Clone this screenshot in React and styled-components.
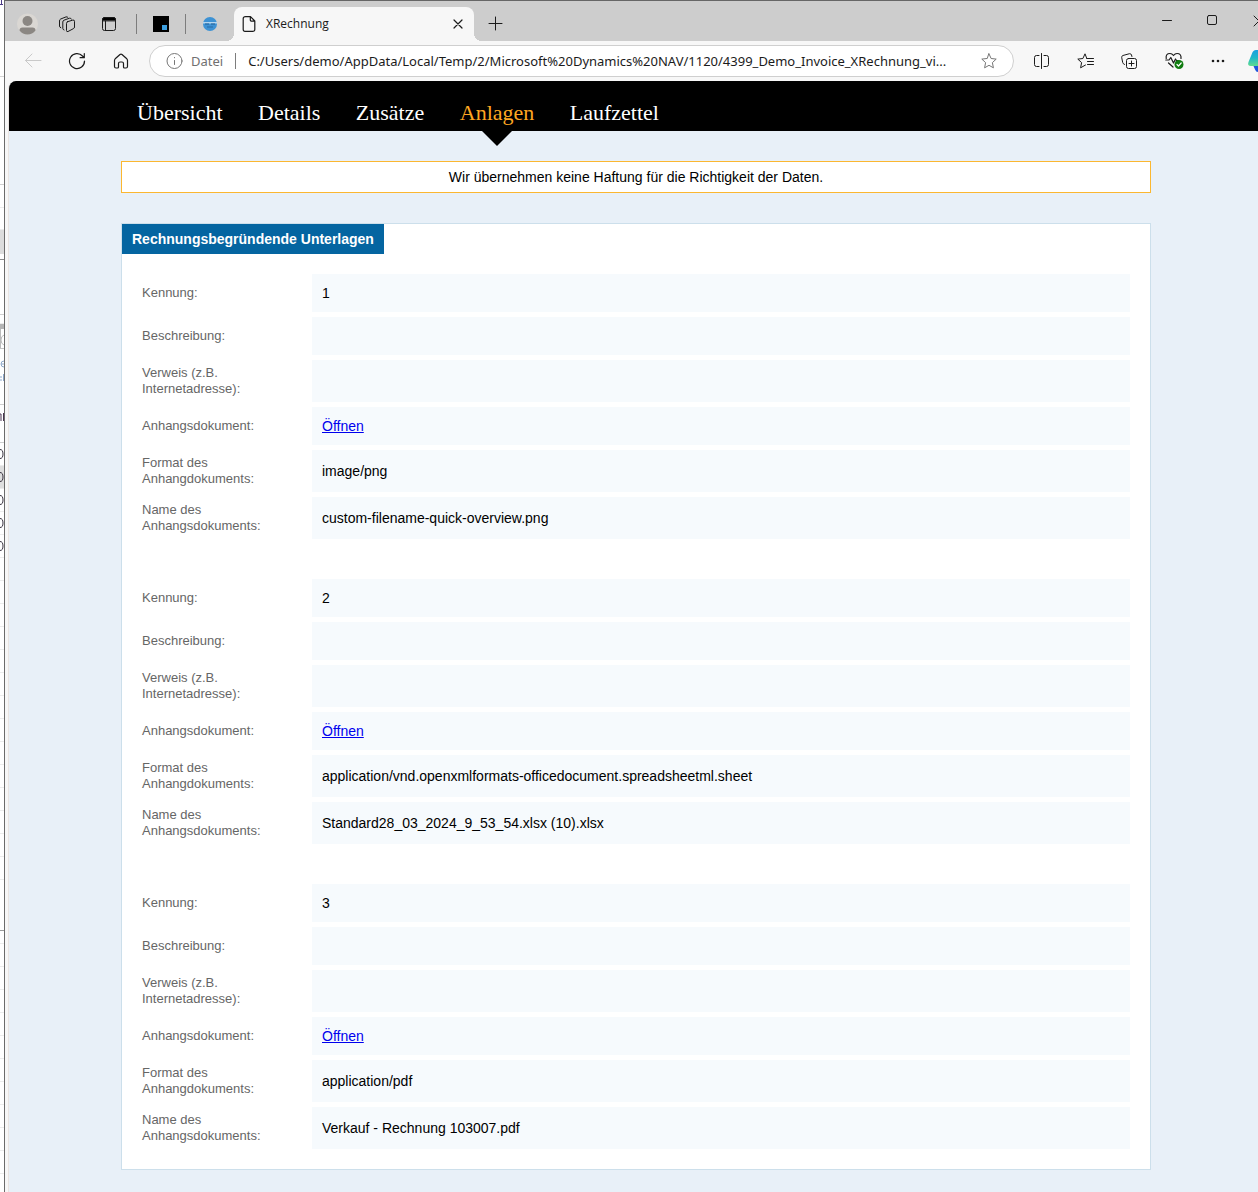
import React from "react";
import styled, { createGlobalStyle, css } from "styled-components";

const GlobalStyle = createGlobalStyle`
  *, *::before, *::after { box-sizing: border-box; }
  body { margin: 0; background: #fff; font-family: "Liberation Sans", Arial, sans-serif; overflow-x: hidden; }
`;

/* ---------- desktop and window frame ---------- */

const Desktop = styled.div`
  display: flex;
  min-height: 100vh;
  overflow: hidden;
`;

const Backdrop = styled.div`
  flex: none;
  width: 4px;
  contain: size;
  overflow: hidden;
  background: #fff;
`;

const Strip = styled.div`
  height: ${(p) => p.$h}px;
  background: ${(p) => p.$bg || "#fff"};
  border-bottom: 1px solid ${(p) => p.$line || "#ececec"};
`;

const Glyph = styled.svg`
  display: block;
`;

const Window = styled.div`
  flex: 1;
  min-width: 0;
  display: flex;
  flex-direction: column;
  background: #f7f7f7;
  border-left: 1px solid #6b6b6b;
  border-top: 1px solid #666;
`;

const Svg = styled.svg`
  display: block;
  flex: none;
  fill: none;
  stroke: ${(p) => p.$color || "#1b1b1b"};
  stroke-width: ${(p) => p.$weight || 1};
  stroke-linecap: round;
  stroke-linejoin: round;
`;

const IconButton = styled.button`
  flex: none;
  display: flex;
  align-items: center;
  justify-content: center;
  width: ${(p) => p.$w || 44}px;
  height: 40px;
  padding: 0;
  border: 0;
  background: none;
  overflow: hidden;
`;

/* ---------- tab strip ---------- */

const TabStrip = styled.div`
  display: flex;
  align-items: flex-end;
  height: 40px;
  padding-left: 2px;
  background: #cdcdcd;
`;

const StripTools = styled.div`
  display: flex;
  align-items: center;
  height: 34px;
`;

const Divider = styled.span`
  flex: none;
  width: 1px;
  height: ${(p) => p.$h || 20}px;
  background: #7d7d7d;
  margin-left: ${(p) => p.$gap || 0}px;
`;

const Tab = styled.div`
  position: relative;
  flex: none;
  display: flex;
  align-items: center;
  width: 240px;
  height: 34px;
  padding-left: 8px;
  background: #f7f7f7;
  border-radius: 8px 8px 0 0;
  font: 12px/16px "Open Sans", "Noto Sans", sans-serif;
  color: #1b1b1b;

  &::before, &::after {
    content: "";
    position: absolute;
    bottom: 0;
    width: 8px;
    height: 8px;
  }
  &::before {
    right: 100%;
    background: radial-gradient(circle at 0 0, #cdcdcd 8px, #f7f7f7 8px);
  }
  &::after {
    left: 100%;
    background: radial-gradient(circle at 100% 0, #cdcdcd 8px, #f7f7f7 8px);
  }
`;

const TabTitle = styled.span`
  flex: 1;
  padding-left: 10px;
`;

const WindowControls = styled.div`
  display: flex;
  align-self: flex-start;
  margin-left: auto;
`;

/* ---------- toolbar ---------- */

const Toolbar = styled.div`
  display: flex;
  align-items: center;
  height: 40px;
  padding-left: 6px;
`;

const AddressBar = styled.div`
  flex: 1;
  min-width: 0;
  display: flex;
  align-items: center;
  height: 32px;
  margin: 0 6px;
  padding: 0 16px;
  background: #fff;
  border: 1px solid #cfcfcf;
  border-radius: 16px;
  font: 13px/20px "Noto Sans", "Open Sans", sans-serif;
`;

const Scheme = styled.label`
  padding: 0 12px 0 8px;
  color: #707070;
`;

const Url = styled.input`
  flex: 1;
  min-width: 0;
  height: 24px;
  padding: 0 0 0 12px;
  border: 0;
  outline: 0;
  background: none;
  font: inherit;
  color: #1b1b1b;
`;

/* ---------- document ---------- */

const Page = styled.div`
  flex: 1;
  margin-left: 3px;
  border-left: 1px solid #e9e4e1;
  border-top-left-radius: 8px;
  background: #e8f0f8;
  overflow: hidden;
`;

const Nav = styled.nav`
  height: 50px;
  padding-left: 113px;
  background: #000;
`;

const NavList = styled.ul`
  margin: 0;
  padding: 0;
  list-style: none;
  font: 22px/50px "Liberation Serif", "Times New Roman", serif;
`;

const NavItem = styled.li`
  position: relative;
  display: inline-block;
  height: 50px;
  padding: 7px 15px 0;

  ${(p) =>
    p.$active &&
    css`
      &::after {
        content: "";
        position: absolute;
        top: 100%;
        left: 50%;
        margin-left: -15px;
        border: 15px solid transparent;
        border-top-color: #000;
        border-bottom: 0;
      }
    `}
`;

const NavLink = styled.a`
  color: ${(p) => (p.$active ? "#ffa722" : "#fff")};
  text-decoration: none;
`;

const Main = styled.main`
  padding: 30px 107px 22px 112px;
`;

const Notice = styled.p`
  margin: 0 0 30px;
  padding: 6px 10px;
  border: 1px solid #fbb731;
  background: #fff;
  text-align: center;
  font-size: 14px;
  line-height: 18px;
  color: #000;
`;

const Card = styled.section`
  border: 1px solid #ccdfeb;
  background: #fff;
`;

const CardTitle = styled.h2`
  width: fit-content;
  margin: 0;
  padding: 6px 10px;
  background: #0465a1;
  color: #fff;
  font-size: 14px;
  line-height: 18px;
`;

const Groups = styled.div`
  display: grid;
  gap: 40px;
  padding: 20px;
`;

const Fields = styled.dl`
  display: grid;
  gap: 5px;
  margin: 0;
`;

const Field = styled.div`
  display: grid;
  grid-template-columns: 170px 1fr;
  min-height: 38px;
`;

const Label = styled.dt`
  align-self: center;
  padding: 5px 10px 5px 0;
  font-size: 13px;
  line-height: 16px;
  color: #666;
`;

const Value = styled.dd`
  display: flex;
  align-items: center;
  margin: 0;
  padding: 10px;
  background: #f6fafd;
  font-size: 14px;
  line-height: 18px;
  color: #000;
`;

const OpenLink = styled.a`
  color: #0000ee;
`;

const navItems = ["Übersicht", "Details", "Zusätze", "Anlagen", "Laufzettel"];

const attachments = [
  { id: "1", format: "image/png", name: "custom-filename-quick-overview.png" },
  {
    id: "2",
    format: "application/vnd.openxmlformats-officedocument.spreadsheetml.sheet",
    name: "Standard28_03_2024_9_53_54.xlsx (10).xlsx",
  },
  { id: "3", format: "application/pdf", name: "Verkauf - Rechnung 103007.pdf" },
];

const range = (n) => Array.from({ length: n }, (_, i) => i);

function BackgroundApp() {
  return (
    <Backdrop aria-hidden="true">
      <Strip $h={77} $line="#d5d5d5">
        <Glyph width="4" height="6">
          <path d="M1.5 0v5M0 4.5h3" stroke="#4b3a86" />
        </Glyph>
      </Strip>
      <Strip $h={108} $line="#d0d0d0" />
      <Strip $h={23} />
      <Strip $h={22} />
      <Strip $h={24} $bg="#dcdcdc" $line="#dcdcdc" />
      <Strip $h={6} $line="#8c8c8c" />
      <Strip $h={55} $line="#d0d0d0" />
      <Strip $h={9} />
      <Strip $h={5} $bg="#b5b5b5" $line="#b5b5b5" />
      <Strip $h={20} $line="#c4c4c4">
        <Glyph width="4" height="19" fill="none">
          <path d="M.5 0v19M4 6q-3 1-3 5t3 5" stroke="#bbb" />
        </Glyph>
      </Strip>
      <Strip $h={56} $line="#cfcfcf">
        <Glyph width="4" height="40" fill="none">
          <path d="M4 12q-3 0-3 3t3 3M1 15h3M0 28h2M0 31h2M3.5 25v7" stroke="#8ea8ca" />
        </Glyph>
      </Strip>
      <Strip $h={38} $line="#cfcfcf">
        <Glyph width="4" height="20" fill="none">
          <path d="M0 9h1v7M3.5 8v8" stroke="#4a3450" />
        </Glyph>
      </Strip>
      {range(5).map((i) => (
        <Strip key={i} $h={23} $bg={i === 1 ? "#dedede" : "#fff"}>
          <Glyph width="4" height="20" fill="none">
            <path d="M0 6.5q3 0 3 4.500t-3 4.500" stroke="#3a3340" />
          </Glyph>
        </Strip>
      ))}
      {range(14).map((i) => (
        <Strip key={i} $h={23} />
      ))}
      <Strip $h={51} $line="#9a9a9a" />
      <Strip $h={13} />
      {range(11).map((i) => (
        <Strip key={i} $h={23} />
      ))}
    </Backdrop>
  );
}

function Tabs() {
  return (
    <TabStrip>
      <StripTools>
        <IconButton $w={40} aria-label="Profil">
          <Svg width="21" height="22" viewBox="0 0 21 22" $color="none">
            <circle cx="10.5" cy="11" r="10.5" fill="#dad7d3" />
            <circle cx="10.5" cy="8" r="5" fill="#8b8783" />
            <path d="M2.5 17.500q0-3 3-3h10q3 0 3 3-3 4-8 4t-8-4z" fill="#8b8783" />
          </Svg>
        </IconButton>
        <IconButton $w={40} aria-label="Arbeitsbereiche">
          <Svg width="18" height="17" viewBox="0 0 18 17">
            <path d="M9.5 5.700l5.300-1.600q1.700-.400 1.700 1.200v5.700q0 1.300-1.200 1.700l-5.300 2.800q-1.500.600-1.500-1V7.400q0-1.300 1-1.700z" />
            <path d="M6 14q-1.200-.300-1.200-1.700V6q0-1.300 1.200-1.800l5.500-2q1.500-.400 1.900.900" />
            <path d="M2.800 11.800Q1.500 11.300 1.500 10V5q0-1.500 1.200-2L8 .900q1.200-.400 1.900.500" />
          </Svg>
        </IconButton>
        <IconButton aria-label="Tab-Aktionen">
          <Svg width="16" height="16" viewBox="0 0 16 16">
            <rect x="1.5" y="1.5" width="13" height="13" rx="2" />
            <path d="M1.5 4.500v-1q0-2 2-2h9q2 0 2 2v1z" fill="#000" />
            <path d="M4.5 5v9" />
          </Svg>
        </IconButton>
        <Divider $gap={5} />
        <IconButton $w={48} aria-label="Angehefteter Tab">
          <Svg width="16" height="16" $color="none">
            <rect width="16" height="16" fill="#000" />
            <rect x="9" y="9" width="5" height="5" fill="#3d9fe0" />
          </Svg>
        </IconButton>
        <Divider />
        <IconButton $w={48} aria-label="Angehefteter Tab">
          <Svg width="16" height="16" $color="none">
            <circle cx="8" cy="8" r="7" fill="#3d92d4" />
            <path d="M1 6h14v1.500H1z" fill="#b4d6ef" />
            <path d="M3 7.500h4v1H3zM9 7.500h4v1H9z" fill="#225e96" />
            <path d="M5 10.500h6v1H5z" fill="#2a6ba5" />
          </Svg>
        </IconButton>
      </StripTools>
      <Tab>
        <Svg width="14" height="16" viewBox="0 0 14 16" $weight={1.2}>
          <path d="M3.500.700h5l4.300 4.300v8.500q0 1.800-1.800 1.800H3q-1.800 0-1.800-1.800v-11Q1.200.700 3.500.700zM8.300 1v2.700q0 1.500 1.500 1.500h2.700" />
        </Svg>
        <TabTitle>XRechnung</TabTitle>
        <IconButton $w={32} aria-label="Tab schließen">
          <Svg width="10" height="10" $weight={1.2}>
            <path d="M1 1l8 8M9 1L1 9" />
          </Svg>
        </IconButton>
      </Tab>
      <StripTools>
        <IconButton aria-label="Neuer Tab">
          <Svg width="16" height="16">
            <path d="M7.5 1v13M1 7.500h13" />
          </Svg>
        </IconButton>
      </StripTools>
      <WindowControls>
        <IconButton $w={46} aria-label="Minimieren">
          <Svg width="12" height="12">
            <path d="M1.500 5.500h9" />
          </Svg>
        </IconButton>
        <IconButton $w={46} aria-label="Maximieren">
          <Svg width="12" height="12">
            <rect x=".5" y=".5" width="9" height="9" rx="1.5" />
          </Svg>
        </IconButton>
        <IconButton $w={22} aria-label="Schließen">
          <Svg width="22" height="12">
            <path d="M18 1l10 10M28 1L18 11" />
          </Svg>
        </IconButton>
      </WindowControls>
    </TabStrip>
  );
}

function AddressRow() {
  return (
    <Toolbar>
      <IconButton aria-label="Zurück">
        <Svg width="18" height="16" $color="#c9c9c9">
          <path d="M17 7.500H1.500M8 1L1.500 7.500 8 14" />
        </Svg>
      </IconButton>
      <IconButton aria-label="Aktualisieren">
        <Svg width="18" height="18" $weight={1.2}>
          <path d="M16.500 9A7.500 7.500 0 1 1 14.500 4L16 5.500M16.300 1.500v4.200h-4.200" />
        </Svg>
      </IconButton>
      <IconButton aria-label="Startseite">
        <Svg width="16" height="18" $weight={1.2}>
          <path d="M1.500 8.500q0-1 .700-1.700L7 2.500q1-.800 2 0l4.800 4.300q.700.700.700 1.700v6q0 1.500-1.500 1.500h-1.500q-1 0-1-1v-3.500q0-1.500-1.500-1.500H7q-1.500 0-1.500 1.500V15q0 1-1 1H3q-1.500 0-1.500-1.500z" />
        </Svg>
      </IconButton>
      <AddressBar>
        <Svg width="17" height="16" $color="#767676">
          <circle cx="8.500" cy="8" r="7.500" />
          <path d="M8.500 7.500v4M8.500 4.500v.300" />
        </Svg>
        <Scheme htmlFor="url">Datei</Scheme>
        <Divider $h={16} />
        <Url
          id="url"
          readOnly
          value="C:/Users/demo/AppData/Local/Temp/2/Microsoft%20Dynamics%20NAV/1120/4399_Demo_Invoice_XRechnung_vi..."
        />
        <Svg width="16" height="16" $color="#767676">
          <path d="M8 .800l2.100 4.700 5.100.600-3.800 3.500 1 5.200L8 12.300l-4.400 2.500 1-5.200L.800 6.100l5.100-.600z" />
        </Svg>
      </AddressBar>
      <IconButton aria-label="Geteilter Bildschirm">
        <Svg width="17" height="16">
          <path d="M5 2.500H2.500q-2 0-2 2v7q0 2 2 2H5M10 2.500h2.500q2 0 2 2v7q0 2-2 2H10M7.500.500v15" />
        </Svg>
      </IconButton>
      <IconButton aria-label="Favoriten">
        <Svg width="18" height="16">
          <path d="M9.800 5.500L8 .800 5.900 5.500l-5.100.600 3.800 3.500-1 5.200L8.500 12M9.800 5.500h6.700M10.500 8.500h6M10.500 11.500h6" />
        </Svg>
      </IconButton>
      <IconButton aria-label="Sammlungen">
        <Svg width="18" height="17">
          <rect x="5.500" y="5.500" width="10" height="10" rx="2" />
          <path d="M10.500 8v5M8 10.500h5M3.500 11.500Q2 11 1.700 9.500L.700 4.500q-.200-1.500 1.200-2L8.500.700q1.500-.200 2 1.300l.400 1.500" />
        </Svg>
      </IconButton>
      <IconButton aria-label="Browser-Essentials">
        <Svg width="19" height="18" $weight={1.2}>
          <path d="M1.200 6.500Q.500 1.500 5 1.500q2 0 3.500 2 1.500-2 3.500-2 4.500 0 4 5M.800 8h3.200l1.800-2.500 2.700 5.500 2-4 1 1.500h2M3.500 11l4.500 4" />
          <circle cx="14" cy="12.500" r="4.500" fill="#107c10" stroke="none" />
          <path d="M12 12.500l1.500 1.500 2.700-3" stroke="#fff" />
        </Svg>
      </IconButton>
      <IconButton aria-label="Weitere Optionen">
        <Svg width="14" height="4" $color="none">
          <g fill="#1b1b1b">
            <circle cx="2" cy="2" r="1.300" />
            <circle cx="7" cy="2" r="1.300" />
            <circle cx="12" cy="2" r="1.300" />
          </g>
        </Svg>
      </IconButton>
      <IconButton $w={18} aria-label="Copilot">
        <Svg width="18" height="24" $color="none">
          <defs>
            <linearGradient id="copilot" x1="0" y1="0" x2="0" y2="1">
              <stop offset="0" stopColor="#1b9fe0" />
              <stop offset=".5" stopColor="#22b8c8" />
              <stop offset="1" stopColor="#5fdc8f" />
            </linearGradient>
          </defs>
          <path d="M18 1h-2q-3 0-4 3.500L8.500 13q-1.500 4 2.500 4h7z" fill="url(#copilot)" />
          <path d="M13.500 17H18v6q-2 0-3-2.500z" fill="#1f55dc" />
        </Svg>
      </IconButton>
    </Toolbar>
  );
}

function Attachment({ item }) {
  const rows = [
    ["Kennung:", item.id],
    ["Beschreibung:", ""],
    ["Verweis (z.B. Internetadresse):", ""],
    ["Anhangsdokument:", <OpenLink href="#anhang">Öffnen</OpenLink>],
    ["Format des Anhangdokuments:", item.format],
    ["Name des Anhangsdokuments:", item.name],
  ];
  return (
    <Fields>
      {rows.map(([label, value]) => (
        <Field key={label}>
          <Label>{label}</Label>
          <Value>{value}</Value>
        </Field>
      ))}
    </Fields>
  );
}

export default function App() {
  return (
    <Desktop>
      <GlobalStyle />
      <BackgroundApp />
      <Window>
        <Tabs />
        <AddressRow />
        <Page>
          <Nav>
            <NavList>
              {navItems.map((text) => {
                const active = text === "Anlagen";
                return (
                  <React.Fragment key={text}>
                    <NavItem $active={active}>
                      <NavLink href="#" $active={active}>
                        {text}
                      </NavLink>
                    </NavItem>{" "}
                  </React.Fragment>
                );
              })}
            </NavList>
          </Nav>
          <Main>
            <Notice>Wir übernehmen keine Haftung für die Richtigkeit der Daten.</Notice>
            <Card>
              <CardTitle>Rechnungsbegründende Unterlagen</CardTitle>
              <Groups>
                {attachments.map((item) => (
                  <Attachment key={item.id} item={item} />
                ))}
              </Groups>
            </Card>
          </Main>
        </Page>
      </Window>
    </Desktop>
  );
}
